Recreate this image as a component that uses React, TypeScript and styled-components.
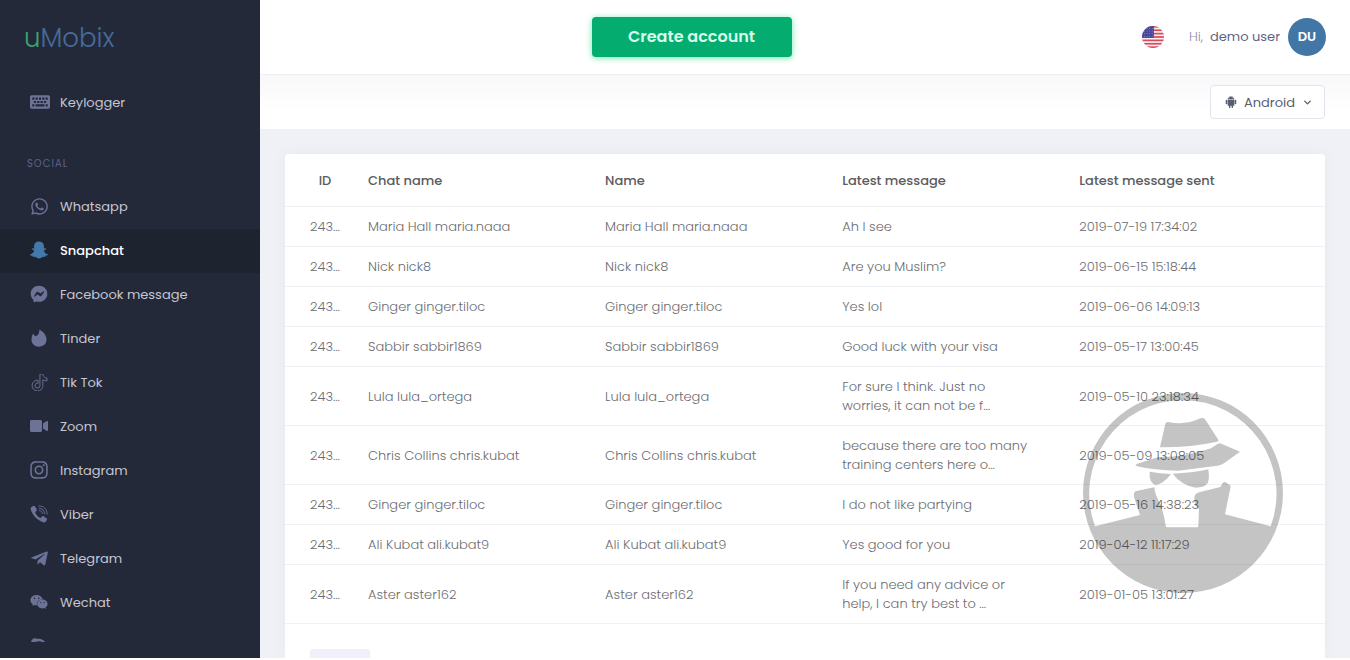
import React from 'react';
import styled, { createGlobalStyle, css } from 'styled-components';
import {
  FaKeyboard,
  FaWhatsapp,
  FaSnapchatGhost,
  FaTiktok,
  FaVideo,
  FaInstagram,
  FaTelegramPlane,
  FaWeixin,
  FaSkype,
} from 'react-icons/fa';
import { RiMessengerFill } from 'react-icons/ri';
import { AiFillAndroid } from 'react-icons/ai';
import { ChevronDown } from 'lucide-react';

const GlobalStyle = createGlobalStyle`
  *, *::before, *::after { box-sizing: border-box; }
  body {
    margin: 0;
    background: #fff;
    font-family: Poppins, Inter, 'Open Sans', sans-serif;
    font-size: 13px;
    color: #6c7293;
  }
  button, select { font: inherit; color: inherit; }
`;

const Shell = styled.div`
  display: flex;
  height: calc(100vh - 2px);
  overflow: hidden;
`;

/* ---------- sidebar ---------- */

const Sidebar = styled.aside`
  flex: 0 0 260px;
  display: flex;
  flex-direction: column;
  padding-bottom: 16px;
  background: #242939;
`;

const Logo = styled.a`
  padding: 22px 24px 27px;
  font-size: 26px;
  font-weight: 300;
  line-height: 32px;
  color: #456c9c;
  text-decoration: none;
`;

const LogoAccent = styled.span`
  color: #3da56c;
`;

const NavScroll = styled.nav`
  flex: 1;
  min-height: 0;
  overflow: hidden;
`;

const NavList = styled.ul`
  margin: 0;
  padding: 0;
  list-style: none;
`;

const NavHeading = styled.h2`
  margin: 0;
  padding: 29px 27px 11px;
  font-size: 10px;
  font-weight: 400;
  line-height: 20px;
  letter-spacing: 1px;
  text-transform: uppercase;
  color: #5c6384;
`;

const NavLink = styled.a<{ $active?: boolean }>`
  display: flex;
  align-items: center;
  gap: 12px;
  height: 44px;
  padding: 0 30px;
  color: #c4c6d3;
  text-decoration: none;

  svg {
    flex: none;
    color: #6c7396;
  }

  ${p =>
    p.$active &&
    css`
      background: #1d2430;
      color: #fff;
      font-weight: 500;
      svg {
        color: #4479ab;
      }
    `}
`;

const IconSlot = styled.span<{ $start?: boolean }>`
  display: flex;
  justify-content: ${p => (p.$start ? 'flex-start' : 'center')};
  width: 18px;
  padding-bottom: 2px;
`;

/* ---------- main column ---------- */

const Main = styled.main`
  flex: 1;
  min-width: 0;
  display: flex;
  flex-direction: column;
  background: #f0f1f6;
`;

const Header = styled.header`
  display: grid;
  grid-template-columns: 1fr auto 1fr;
  align-items: center;
  flex: none;
  height: 74px;
  padding: 0 24px;
  background: #fff;
`;

const CreateButton = styled.button`
  grid-column: 2;
  width: 200px;
  height: 40px;
  margin-right: 227px;
  padding-bottom: 3px;
  border: 0;
  border-radius: 4px;
  background: #04ad6f;
  box-shadow: 0 1px 6px rgba(10, 220, 120, 0.6);
  color: #d8fbea;
  font-size: 16px;
  font-weight: 600;
`;

const HeaderGrid = styled.div`
  grid-column: 3;
  display: flex;
  align-items: center;
  justify-content: flex-end;
`;

const FlagButton = styled.button`
  display: flex;
  padding: 0;
  margin-right: 25px;
  border: 0;
  border-radius: 50%;
  background: none;
`;

const Greeting = styled.span`
  margin-right: 7px;
  font-weight: 300;
  color: #8b8fa8;
`;

const UserName = styled.span`
  margin-right: 8px;
  color: #5f6484;
`;

const Avatar = styled.span`
  display: grid;
  place-items: center;
  width: 38px;
  height: 38px;
  border-radius: 50%;
  background: #4176a6;
  color: #fff;
  font-weight: 600;
`;

const Toolbar = styled.div`
  display: flex;
  align-items: center;
  justify-content: flex-end;
  flex: none;
  height: 55px;
  padding: 0 25px;
  border-top: 1px solid #efeff2;
  background: linear-gradient(#f8f8fa, #fff 36px);
`;

const DeviceField = styled.label`
  display: flex;
  align-items: center;
  gap: 6px;
  height: 34px;
  padding: 0 11px 0 13px;
  border: 1px solid #e2e4ec;
  border-radius: 4px;
  background: #fff;
  color: #595d6e;
`;

const DeviceSelect = styled.select`
  appearance: none;
  padding: 0;
  border: 0;
  background: none;
`;

/* ---------- table card ---------- */

const Card = styled.section`
  flex: 1;
  margin: 25px 25px 0;
  border-radius: 4px 4px 0 0;
  background: #fff;
  box-shadow: 0 0 13px rgba(82, 63, 105, 0.05);
  overflow: hidden;
`;

const Table = styled.table`
  width: 100%;
  border-collapse: separate;
  border-spacing: 0;
  table-layout: fixed;
  line-height: 19px;
`;

const IdCol = styled.col`
  width: 73px;
`;

const TextCol = styled.col`
  width: 22.8%;
`;

const HeadCell = styled.th<{ $center?: boolean }>`
  height: 53px;
  padding: 0 10px;
  border-bottom: 1px solid #f0f1f6;
  text-align: left;
  font-weight: 500;
  color: #5b5b60;
  ${p => p.$center && 'padding: 0 18px 0 25px; text-align: center;'}
`;

const Cell = styled.td<{ $first?: boolean }>`
  padding: 10px;
  border-bottom: 1px solid #f0f1f6;
  font-weight: 300;
  color: #6c6d71;
  ${p => p.$first && 'padding-left: 25px; padding-right: 0; white-space: nowrap;'}
`;

const Message = styled.div`
  max-width: 190px;
`;

const PagerButton = styled.button`
  display: block;
  width: 60px;
  height: 36px;
  margin: 25px;
  border: 0;
  border-radius: 3px;
  background: #f0f0fb;
`;

const Watermark = styled.svg`
  position: fixed;
  right: 67px;
  bottom: 67px;
  width: 200px;
  height: 200px;
  pointer-events: none;
`;

/* ---------- icons ---------- */

function TinderIcon() {
  return (
    <svg width="18" height="18" viewBox="0 0 24 24" fill="currentColor" aria-hidden="true">
      <path d="M12.5 0.5C18 3.5 22 8.500 22 14C22 19.700 17.600 23.500 12 23.500S2 19.600 2 14.200C2 11 2.800 8 4.500 6C5.300 7.800 6 9 7.500 9.800C11.300 8 12.900 4 12.500 0.500Z" />
    </svg>
  );
}

function ViberIcon() {
  return (
    <svg width="18" height="18" viewBox="0 0 24 24" aria-hidden="true">
      <path
        fill="currentColor"
        d="M2 2.600L4.300 1.200Q5.700 0.600 6.600 1.900L9 5.500Q9.700 7 8.500 8L7.300 9Q6.700 9.700 7.100 10.600Q9.200 14.900 13.100 17Q14.100 17.500 14.800 16.700L15.900 15.400Q16.900 14.300 18.300 15.100L21.900 17.700Q23.200 18.700 22.500 20L20.900 22.400Q19.900 23.700 18.300 23.200C9.500 20.300 3.600 14.300 1 6Q0.400 3.900 2 2.600Z"
      />
      <g fill="none" stroke="currentColor" strokeWidth="1.200" strokeLinecap="round">
        <path d="M12 1.200C18.500 1.200 22.800 5.500 22.800 12" />
        <path d="M12.300 4.400C16.800 4.700 19.300 7.200 19.600 11.500" />
        <path d="M12.700 7.500C15.200 7.700 16.300 8.900 16.500 11.200" />
      </g>
    </svg>
  );
}

function FlagIcon() {
  const stripes = [0, 1, 2, 3, 4, 5, 6];
  const stars = [3, 6, 9, 12];
  return (
    <svg width="22" height="22" viewBox="0 0 26 26" aria-hidden="true">
      <clipPath id="flag-round">
        <circle cx="13" cy="13" r="13" />
      </clipPath>
      <g clipPath="url(#flag-round)">
        <rect width="26" height="26" fill="#f5f0f2" />
        {stripes.map(i => (
          <rect key={i} y={i * 4} width="26" height="2" fill="#dc4a5a" />
        ))}
        <rect width="14" height="14" fill="#46489a" />
        <g fill="#8f90c8">
          {stars.map(y => stars.map(x => <circle key={`${x}-${y}`} cx={x} cy={y} r="0.6" />))}
        </g>
      </g>
    </svg>
  );
}

function SpyWatermark() {
  return (
    <Watermark viewBox="0 0 600 600" aria-hidden="true">
      <g opacity="0.23" fill="#000">
        <path
          fillRule="evenodd"
          d="M300 0A300 300 0 1 1 300 600A300 300 0 1 1 300 0ZM36 400L171 366L153 312Q151 296 160 294L214 283Q217 310 233 334Q244 370 248 398Q249 403 253 403L342 403Q346 403 346 398L348 348Q333 338 334 312Q336 302 348 298L412 282L419 270Q423 265 428 268L441 277Q444 280 442 285L426 364L563 400A281 281 0 1 0 36 400Z"
        />
        <path d="M247 92Q249 86 255 87Q307 98 352 76Q363 72 367 80L405 139Q409 145 402 146Q320 164 231 163Z" />
        <path d="M159 219Q155 216 163 212L226 192Q300 194 384 166L405 152Q410 150 415 152L471 176L424 210Q416 216 404 218L285 233Q215 232 159 219Z" />
        <path d="M200 236Q230 242 264 243Q242 272 219 276Q197 270 200 236Z" />
        <path d="M269 242Q325 240 376 229Q380 258 374 270Q366 284 338 284Q296 277 269 242Z" />
      </g>
    </Watermark>
  );
}

/* ---------- data ---------- */

const social = [
  { name: 'Whatsapp', icon: <FaWhatsapp size={19} /> },
  { name: 'Snapchat', icon: <FaSnapchatGhost size={18} />, active: true },
  { name: 'Facebook message', icon: <RiMessengerFill size={20} /> },
  { name: 'Tinder', icon: <TinderIcon /> },
  { name: 'Tik Tok', icon: <FaTiktok size={17} fill="none" strokeWidth={28} /> },
  { name: 'Zoom', icon: <FaVideo size={18} /> },
  { name: 'Instagram', icon: <FaInstagram size={20} /> },
  { name: 'Viber', icon: <ViberIcon /> },
  { name: 'Telegram', icon: <FaTelegramPlane size={19} /> },
  { name: 'Wechat', icon: <FaWeixin size={18} /> },
  { name: 'Skype', icon: <FaSkype size={18} /> },
];

const chats = [
  { who: 'Maria Hall maria.naaa', message: 'Ah I see', sent: '2019-07-19 17:34:02' },
  { who: 'Nick nick8', message: 'Are you Muslim?', sent: '2019-06-15 15:18:44' },
  { who: 'Ginger ginger.tiloc', message: 'Yes lol', sent: '2019-06-06 14:09:13' },
  { who: 'Sabbir sabbir1869', message: 'Good luck with your visa', sent: '2019-05-17 13:00:45' },
  { who: 'Lula lula_ortega', message: 'For sure I think. Just no worries, it can not be f…', sent: '2019-05-10 23:18:34' },
  { who: 'Chris Collins chris.kubat', message: 'because there are too many training centers here o…', sent: '2019-05-09 13:08:05' },
  { who: 'Ginger ginger.tiloc', message: 'I do not like partying', sent: '2019-05-16 14:38:23' },
  { who: 'Ali Kubat ali.kubat9', message: 'Yes good for you', sent: '2019-04-12 11:17:29' },
  { who: 'Aster aster162', message: 'If you need any advice or help, I can try best to …', sent: '2019-01-05 13:01:27' },
];

export default function App() {
  return (
    <>
      <GlobalStyle />
      <Shell>
        <Sidebar>
          <Logo href="#">
            <LogoAccent>u</LogoAccent>Mobix
          </Logo>
          <NavScroll>
            <NavList>
              <li>
                <NavLink href="#">
                  <IconSlot $start>
                    <FaKeyboard size={20} />
                  </IconSlot>
                  Keylogger
                </NavLink>
              </li>
            </NavList>
            <NavHeading>Social</NavHeading>
            <NavList>
              {social.map(item => (
                <li key={item.name}>
                  <NavLink href="#" $active={item.active} aria-current={item.active ? 'page' : undefined}>
                    <IconSlot>{item.icon}</IconSlot>
                    {item.name}
                  </NavLink>
                </li>
              ))}
            </NavList>
          </NavScroll>
        </Sidebar>

        <Main>
          <Header>
            <CreateButton type="button">Create account</CreateButton>
            <HeaderGrid>
              <FlagButton type="button" aria-label="Language">
                <FlagIcon />
              </FlagButton>
              <Greeting>Hi,</Greeting>
              <UserName>demo user</UserName>
              <Avatar>DU</Avatar>
            </HeaderGrid>
          </Header>
          <Toolbar>
            <DeviceField>
              <AiFillAndroid size={14} aria-hidden="true" />
              <DeviceSelect aria-label="Device" defaultValue="Android">
                <option>Android</option>
              </DeviceSelect>
              <ChevronDown size={11} strokeWidth={3} aria-hidden="true" />
            </DeviceField>
          </Toolbar>

          <Card>
            <Table>
              <colgroup>
                <IdCol />
                <TextCol />
                <TextCol />
                <TextCol />
                <col />
              </colgroup>
              <thead>
                <tr>
                  <HeadCell $center>ID</HeadCell>
                  <HeadCell>Chat name</HeadCell>
                  <HeadCell>Name</HeadCell>
                  <HeadCell>Latest message</HeadCell>
                  <HeadCell>Latest message sent</HeadCell>
                </tr>
              </thead>
              <tbody>
                {chats.map(chat => (
                  <tr key={chat.sent}>
                    <Cell $first>243…</Cell>
                    <Cell>{chat.who}</Cell>
                    <Cell>{chat.who}</Cell>
                    <Cell>
                      <Message>{chat.message}</Message>
                    </Cell>
                    <Cell>{chat.sent}</Cell>
                  </tr>
                ))}
              </tbody>
            </Table>
            <PagerButton type="button" aria-label="Previous page" />
          </Card>
        </Main>
      </Shell>
      <SpyWatermark />
    </>
  );
}
